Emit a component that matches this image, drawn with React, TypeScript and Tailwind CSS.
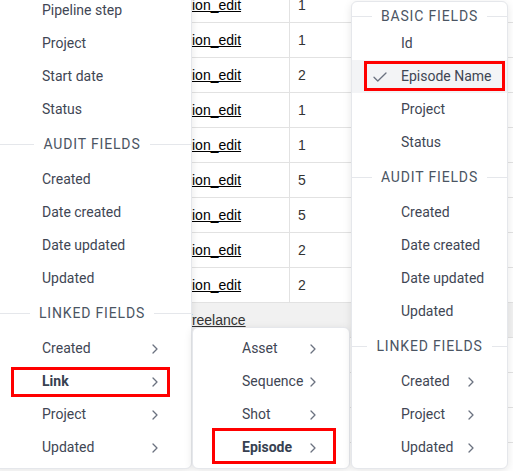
import React from 'react'

type Row = { name: string; count: string }

const rows: Row[] = [
  { name: 'permission_edit', count: '1' },
  { name: 'permission_edit', count: '1' },
  { name: 'permission_edit', count: '2' },
  { name: 'permission_edit', count: '1' },
  { name: 'permission_edit', count: '1' },
  { name: 'permission_edit', count: '5' },
  { name: 'permission_edit', count: '5' },
  { name: 'permission_edit', count: '2' },
  { name: 'permission_edit', count: '2' }
]

type Item =
  | { kind: 'header'; label: string; first?: boolean }
  | { kind: 'item'; label: string; sub?: boolean; bold?: boolean; checked?: boolean; active?: boolean }

const leftMenu: Item[] = [
  { kind: 'item', label: 'Pipeline step' },
  { kind: 'item', label: 'Project' },
  { kind: 'item', label: 'Start date' },
  { kind: 'item', label: 'Status' },
  { kind: 'header', label: 'Audit fields' },
  { kind: 'item', label: 'Created' },
  { kind: 'item', label: 'Date created' },
  { kind: 'item', label: 'Date updated' },
  { kind: 'item', label: 'Updated' },
  { kind: 'header', label: 'Linked fields' },
  { kind: 'item', label: 'Created', sub: true },
  { kind: 'item', label: 'Link', sub: true, bold: true },
  { kind: 'item', label: 'Project', sub: true },
  { kind: 'item', label: 'Updated', sub: true }
]

const linkMenu: Item[] = [
  { kind: 'item', label: 'Asset', sub: true },
  { kind: 'item', label: 'Sequence', sub: true },
  { kind: 'item', label: 'Shot', sub: true },
  { kind: 'item', label: 'Episode', sub: true, bold: true }
]

const episodeMenu: Item[] = [
  { kind: 'header', label: 'Basic fields', first: true },
  { kind: 'item', label: 'Id' },
  { kind: 'item', label: 'Episode Name', checked: true, active: true },
  { kind: 'item', label: 'Project' },
  { kind: 'item', label: 'Status' },
  { kind: 'header', label: 'Audit fields' },
  { kind: 'item', label: 'Created' },
  { kind: 'item', label: 'Date created' },
  { kind: 'item', label: 'Date updated' },
  { kind: 'item', label: 'Updated' },
  { kind: 'header', label: 'Linked fields' },
  { kind: 'item', label: 'Created', sub: true },
  { kind: 'item', label: 'Project', sub: true },
  { kind: 'item', label: 'Updated', sub: true }
]

function Chevron() {
  return (
    <svg width="6" height="10" viewBox="0 0 6 10" fill="none" className="shrink-0">
      <path d="M1 1l4 4-4 4" stroke="#6b7280" strokeWidth="1.3" strokeLinecap="round" strokeLinejoin="round" />
    </svg>
  )
}

function Check() {
  return (
    <svg width="14" height="10" viewBox="0 0 14 10" fill="none" className="shrink-0">
      <path d="M1 5.2l3.8 3.8L13 1" stroke="#6b7280" strokeWidth="1.3" strokeLinecap="round" strokeLinejoin="round" />
    </svg>
  )
}

function MenuList({ items }: { items: Item[] }) {
  return (
    <>
      {items.map((it, i) =>
        it.kind === 'header' ? (
          <div
            key={i}
            className={`flex items-center gap-[9px] ${it.first ? 'h-[21px]' : 'h-[37px]'}`}
          >
            <span className="h-px flex-1 bg-[#e5e7eb]" />
            <span className="text-[14px] uppercase tracking-[0.06em] text-[#4b5563]">{it.label}</span>
            <span className="h-px flex-1 bg-[#e5e7eb]" />
          </div>
        ) : (
          <div
            key={i}
            className={`flex h-[33px] items-center justify-between pr-[33px] text-[14px] ${
              it.checked ? 'pl-[21px]' : 'pl-[49px]'
            } ${it.active ? 'bg-[#f3f4f6]' : ''} ${
              it.bold ? 'font-bold text-[#374151]' : 'text-[#3f4654]'
            }`}
          >
            <span className="flex items-center gap-[14px] whitespace-nowrap">
              {it.checked && <Check />}
              {it.label}
            </span>
            {it.sub && <Chevron />}
          </div>
        )
      )}
    </>
  )
}

export default function App() {
  return (
    <div
      className="relative h-[471px] w-[513px] overflow-hidden bg-white"
      style={{ fontFamily: 'Roboto, "Noto Sans", sans-serif' }}
    >
      {/* Table behind the menus */}
      <div
        className="ml-[136px] -mt-[12px] text-[14px]"
        style={{ fontFamily: '"Liberation Sans", Arial, sans-serif' }}
      >
        {rows.map((r, i) => (
          <div key={i} className="grid h-[35px] grid-cols-[154px_140px] border-b border-[#e2e2e2]">
            <div className="flex items-center border-r border-[#e2e2e2] pl-[7px] text-black underline">
              {r.name}
            </div>
            <div className="flex items-center pl-[8px] text-[#333]">{r.count}</div>
          </div>
        ))}
        <div className="grid h-[35px] grid-cols-[294px] border-b border-[#e2e2e2] bg-[#f1f1f1]">
          <div className="flex items-center pl-[52px] text-[#333] underline">freelance</div>
        </div>
        {[0, 1, 2, 3].map((i) => (
          <div key={i} className="h-[35px] border-b border-[#e2e2e2]" />
        ))}
      </div>

      {/* Field menu */}
      <div className="absolute left-[-8px] top-[-11px] w-[200px] rounded-md border border-[#e5e7eb] bg-white pt-1 pb-1 shadow-[0_2px_8px_rgba(0,0,0,0.1)]">
        <MenuList items={leftMenu} />
      </div>

      {/* Link submenu */}
      <div className="absolute left-[192px] top-[327px] w-[158px] rounded-md border border-[#e5e7eb] bg-white py-1 shadow-[0_2px_8px_rgba(0,0,0,0.1)]">
        <MenuList items={linkMenu} />
      </div>

      {/* Episode submenu */}
      <div className="absolute left-[351px] top-[1px] w-[157px] rounded-md border border-[#e5e7eb] bg-white py-1 shadow-[0_2px_8px_rgba(0,0,0,0.1)]">
        <MenuList items={episodeMenu} />
      </div>

      {/* Highlight annotations */}
      <div className="pointer-events-none absolute left-[11px] top-[367px] h-[30px] w-[159px] border-[3px] border-[#ff0000]" />
      <div className="pointer-events-none absolute left-[212px] top-[428px] h-[36px] w-[124px] border-[3px] border-[#ff0000]" />
      <div className="pointer-events-none absolute left-[364px] top-[61px] h-[30px] w-[141px] border-[3px] border-[#ff0000]" />
    </div>
  )
}
